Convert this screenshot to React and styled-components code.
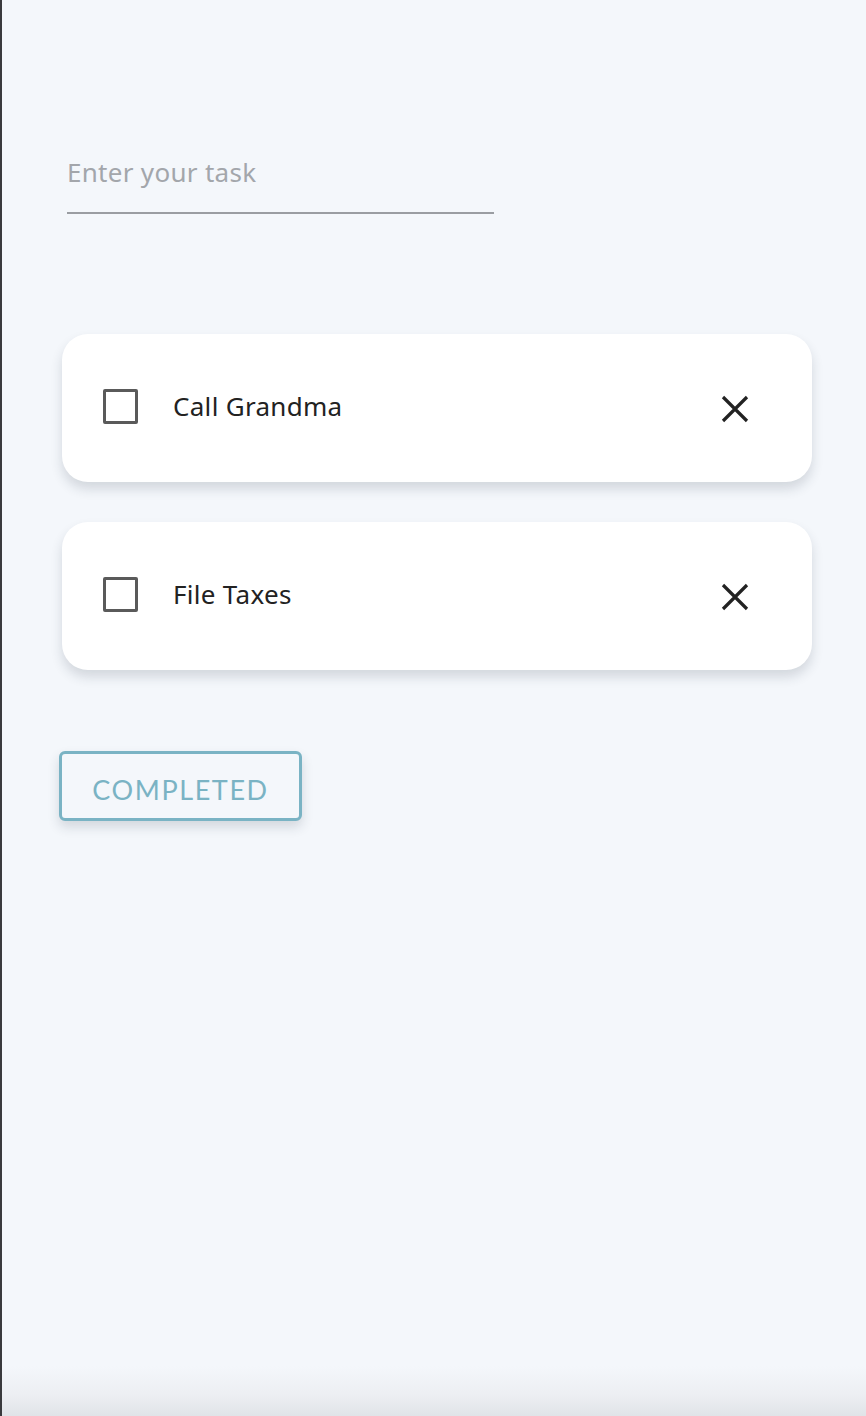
import React, { useState } from 'react';
import styled, { createGlobalStyle } from 'styled-components';

const GlobalStyle = createGlobalStyle`
  html, body {
    margin: 0;
    padding: 0;
  }
  body {
    font-family: "Noto Sans", "Open Sans", sans-serif;
    background: #f4f7fb;
  }
  * {
    box-sizing: border-box;
  }
`;

const Page = styled.div`
  min-height: 1416px;
  border-left: 2px solid #3a3a3d;
  background: linear-gradient(
    to bottom,
    #f4f7fb 0,
    #f4f7fb 1366px,
    #eceef2 1396px,
    #e0e4e8 1416px
  );
  padding: 144px 54px 0 58px;
`;

const TaskInput = styled.input`
  display: block;
  box-sizing: content-box;
  width: 427px;
  height: 56px;
  margin-left: 7px;
  padding: 0 0 12px 0;
  border: none;
  border-bottom: 2px solid #9a9da2;
  background: transparent;
  font-family: "Noto Sans", sans-serif;
  font-size: 26px;
  letter-spacing: 0.3px;
  color: #222;
  outline: none;

  &::placeholder {
    color: #a3a6ab;
  }
`;

const TaskList = styled.div`
  display: flex;
  flex-direction: column;
  gap: 40px;
  margin-top: 120px;
  margin-left: 2px;
  width: 750px;
`;

const Card = styled.div`
  display: flex;
  align-items: center;
  height: 148px;
  padding: 0 62px 4px 41px;
  background: #fff;
  border-radius: 26px;
  box-shadow: 0 7px 12px rgba(40, 50, 70, 0.16);
`;

const Check = styled.button`
  width: 35px;
  height: 35px;
  flex: 0 0 35px;
  padding: 0;
  border: 3.5px solid #5a5a5a;
  border-radius: 2px;
  background: ${(p) => (p.$checked ? '#5a5a5a' : '#fff')};
  cursor: pointer;
`;

const Label = styled.span`
  flex: 1;
  margin-left: 35px;
  font-size: 26px;
  line-height: 1;
  color: #222;
  letter-spacing: 0.3px;
  text-decoration: ${(p) => (p.$done ? 'line-through' : 'none')};
`;

const RemoveButton = styled.button`
  display: flex;
  align-items: center;
  justify-content: center;
  padding: 0;
  border: none;
  background: none;
  cursor: pointer;
  margin-top: 6px;
`;

const CompletedButton = styled.button`
  display: block;
  margin-top: 81px;
  margin-left: -1px;
  width: 243px;
  height: 70px;
  border: 3px solid #7ab3c4;
  border-radius: 6px;
  background: #f4f7fb;
  color: #7ab3c4;
  font-family: "Lato", "Open Sans", sans-serif;
  font-size: 27px;
  letter-spacing: 1.6px;
  padding: 7px 0 0 0;
  box-shadow: 0 6px 12px rgba(40, 50, 70, 0.16);
  cursor: pointer;
`;

const CloseIcon = () => (
  <svg width="30" height="30" viewBox="0 0 30 30" fill="none">
    <path d="M3 3 L27 27 M27 3 L3 27" stroke="#222" strokeWidth="3.2" strokeLinecap="butt" />
  </svg>
);

const App = () => {
  const [tasks, setTasks] = useState([
    { id: 1, text: 'Call Grandma', done: false },
    { id: 2, text: 'File Taxes', done: false },
  ]);
  const [value, setValue] = useState('');

  const toggle = (id) =>
    setTasks(tasks.map((t) => (t.id === id ? { ...t, done: !t.done } : t)));
  const remove = (id) => setTasks(tasks.filter((t) => t.id !== id));

  return (
    <>
      <GlobalStyle />
      <Page>
        <TaskInput
          value={value}
          onChange={(e) => setValue(e.target.value)}
          placeholder="Enter your task"
        />
        <TaskList>
          {tasks.map((task) => (
            <Card key={task.id}>
              <Check $checked={task.done} onClick={() => toggle(task.id)} />
              <Label $done={task.done}>{task.text}</Label>
              <RemoveButton onClick={() => remove(task.id)}>
                <CloseIcon />
              </RemoveButton>
            </Card>
          ))}
        </TaskList>
        <CompletedButton>COMPLETED</CompletedButton>
      </Page>
    </>
  );
};

export default App;
